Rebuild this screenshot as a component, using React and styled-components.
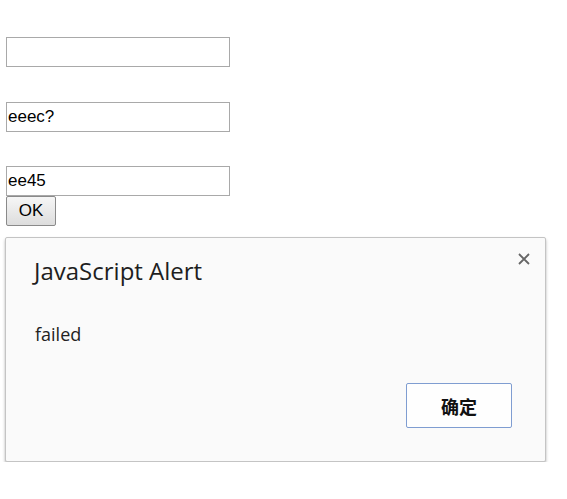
import React from "react";
import styled, { createGlobalStyle } from "styled-components";

const GlobalStyle = createGlobalStyle`
  html, body {
    margin: 0;
    padding: 0;
    background: #ffffff;
  }
  body {
    font-family: "Liberation Sans", Arial, sans-serif;
  }
`;

const Page = styled.div`
  padding: 37px 0 0 6px;
  width: 540px;
`;

const Field = styled.input`
  display: block;
  box-sizing: border-box;
  width: 224px;
  height: 30px;
  margin: 0 0 ${(p) => p.$gap}px 0;
  padding: 1px 1px;
  border: 1px solid #a9a9a9;
  border-radius: 0;
  font-family: "Liberation Sans", Arial, sans-serif;
  font-size: 17px;
  color: #000;
  outline: none;
`;

const OkButton = styled.button`
  display: block;
  box-sizing: border-box;
  width: 50px;
  height: 30px;
  padding: 0;
  border: 1px solid #8a8a8a;
  border-radius: 2px;
  background: linear-gradient(#f6f6f6, #dddddd);
  font-family: "Liberation Sans", Arial, sans-serif;
  font-size: 17px;
  color: #000;
`;

const Dialog = styled.div`
  box-sizing: border-box;
  width: 541px;
  margin: 11px 0 0 -1px;
  padding: 18px 11px 33px 28px;
  background: #fafafa;
  border: 1px solid #c4c4c4;
  border-radius: 2px;
  box-shadow: 0 2px 3px rgba(0, 0, 0, 0.3);
  font-family: "Open Sans", "Noto Sans", sans-serif;
  color: #222;
`;

const Header = styled.div`
  display: flex;
  justify-content: space-between;
  align-items: flex-start;
`;

const Title = styled.div`
  font-size: 24px;
  line-height: 30px;
  color: #1e1e1e;
`;

const Close = styled.button`
  width: 20px;
  height: 20px;
  margin-top: -7px;
  padding: 0;
  border: none;
  background: none;
  display: flex;
  align-items: center;
  justify-content: center;
`;

const Message = styled.div`
  margin: 36px 0 0 1px;
  font-size: 18px;
  line-height: 24px;
  color: #222;
`;

const Footer = styled.div`
  display: flex;
  justify-content: flex-end;
  margin-top: 37px;
  padding-right: 22px;
`;

const ConfirmButton = styled.button`
  box-sizing: border-box;
  width: 106px;
  height: 45px;
  border: 1px solid #7f9dd1;
  border-radius: 2px;
  background: #fefefe;
  font-family: "Noto Sans CJK SC", "Noto Sans", sans-serif;
  font-weight: 700;
  font-size: 18px;
  color: #111;
`;

export default function App() {
  return (
    <>
      <GlobalStyle />
      <Page>
        <Field defaultValue="" $gap={35} />
        <Field defaultValue="eeec?" $gap={34} />
        <Field defaultValue="ee45" $gap={0} />
        <OkButton>OK</OkButton>
        <Dialog>
          <Header>
            <Title>JavaScript Alert</Title>
            <Close aria-label="close">
              <svg width="12" height="12" viewBox="0 0 12 12">
                <path d="M1 1L11 11M11 1L1 11" stroke="#666" strokeWidth="1.8" />
              </svg>
            </Close>
          </Header>
          <Message>failed</Message>
          <Footer>
            <ConfirmButton>确定</ConfirmButton>
          </Footer>
        </Dialog>
      </Page>
    </>
  );
}
